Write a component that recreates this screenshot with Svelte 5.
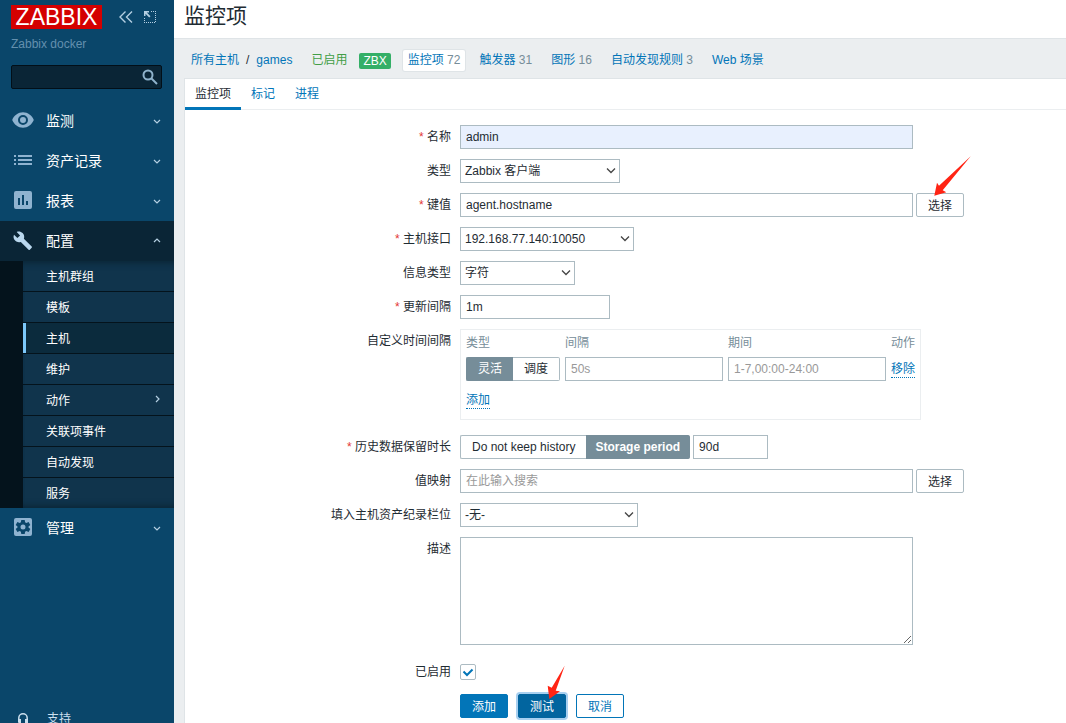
<script lang="ts">
	type MenuItem = { label: string; icon: string };

	const menuTop: MenuItem[] = [
		{ label: '监测', icon: 'eye' },
		{ label: '资产记录', icon: 'list' },
		{ label: '报表', icon: 'report' }
	];

	const submenu = ['主机群组', '模板', '主机', '维护', '动作', '关联项事件', '自动发现', '服务'];
	const currentPage = '主机';

	const hostLinks = [
		{ label: '监控项', count: 72, active: true },
		{ label: '触发器', count: 31 },
		{ label: '图形', count: 16 },
		{ label: '自动发现规则', count: 3 },
		{ label: 'Web 场景' }
	];

	const tabs = ['监控项', '标记', '进程'];
	let activeTab = $state('监控项');

	let name = $state('admin');
	let key = $state('agent.hostname');
	let delay = $state('1m');
	let intervalType = $state('flexible');
	let historyMode = $state('period');
	let history = $state('90d');
	let description = $state('');
	let enabled = $state(true);
</script>

{#snippet chevron(direction: string)}
	<svg class="chevron {direction}" width="8" height="8" viewBox="0 0 8 8" aria-hidden="true">
		<path d="M1 3 4 6 7 3" />
	</svg>
{/snippet}

{#snippet menuIcon(icon: string)}
	<svg class="menu-icon" width="22" height="22" viewBox="0 0 22 22" aria-hidden="true">
		{#if icon === 'eye'}
			<path fill-rule="evenodd" d="M11 2.300C6.200 2.300 2 5.500 0.200 10c1.800 4.500 6 7.700 10.800 7.700s9-3.200 10.800-7.700C20 5.500 15.800 2.300 11 2.300zM11 15a5 5 0 1 1 0-10 5 5 0 0 1 0 10zm0-2a3 3 0 1 0 0-6 3 3 0 0 0 0 6z" />
		{:else if icon === 'list'}
			<path d="M2 5h2v2H2zM6 5h14v2H6zM2 9h2v2H2zM6 9h14v2H6zM2 13h2v2H2zM6 13h14v2H6z" />
		{:else if icon === 'report'}
			<path fill-rule="evenodd" d="M4 1h14a2 2 0 0 1 2 2v14a2 2 0 0 1-2 2H4a2 2 0 0 1-2-2V3a2 2 0 0 1 2-2zm2 7v7h2V8zm4-3v10h2V5zm4 6v4h2v-4z" />
		{:else if icon === 'wrench'}
			<path d="M19.700 16.600 11.900 8.800c.7-1.900.3-4.100-1.300-5.700C9 1.500 6.600 1.100 4.700 2L8.100 5.400 5.400 8.100 2 4.700C1.100 6.600 1.500 9 3.100 10.600c1.600 1.600 3.800 2 5.700 1.300l7.800 7.800c.3.3.9.3 1.200 0l1.900-1.900c.4-.3.4-.9 0-1.200z" />
		{:else}
			<path fill-rule="evenodd" d="M4 1h14a2 2 0 0 1 2 2v14a2 2 0 0 1-2 2H4a2 2 0 0 1-2-2V3a2 2 0 0 1 2-2zm5.300 2-.4 2.200-1.200.7-2.300-.8-1.700 2.900 1.800 1.500v1l-1.800 1.500 1.700 2.900 2.300-.8 1.200.7.4 2.200h3.400l.4-2.200 1.200-.7 2.300.8 1.700-2.900-1.800-1.500v-1l1.800-1.500-1.700-2.900-2.300.8-1.200-.7-.4-2.200zM11 7.500a2.500 2.500 0 1 1 0 5 2.500 2.500 0 0 1 0-5z" />
		{/if}
	</svg>
{/snippet}

{#snippet selectArrow()}
	<svg class="select-arrow" width="10" height="8" viewBox="0 0 10 8" aria-hidden="true">
		<path d="M1 1.500 5 5.500 9 1.500" />
	</svg>
{/snippet}

<div class="layout">
	<aside class="sidebar">
		<div class="brand">
			<a class="logo" href="#home">ZABBIX</a>
			<button class="icon-button" aria-label="收起">
				<svg width="14" height="12" viewBox="0 0 14 12">
					<path d="M6.500.5 1 6l5.500 5.500M13 .5 7.500 6l5.500 5.500" fill="none" stroke="currentColor" stroke-width="1.400" />
				</svg>
			</button>
			<button class="icon-button" aria-label="隐藏">
				<svg width="12" height="12" viewBox="0 0 12 12">
					<path d="M0 0h5v1.500H2.800L6.500 5.200 5.200 6.500 1.500 2.800V5H0z" fill="currentColor" />
					<path d="M7 .5h5M11.500 2v10M.5 7v5M2 11.500h9" fill="none" stroke="currentColor" stroke-dasharray="1 1" />
				</svg>
			</button>
		</div>
		<div class="server-name">Zabbix docker</div>

		<form class="search">
			<input type="search" aria-label="搜索" />
			<button aria-label="搜索" type="button">
				<svg width="16" height="16" viewBox="0 0 16 16">
					<circle cx="6" cy="6" r="4.500" />
					<path d="M9.500 9.500 15 15" />
				</svg>
			</button>
		</form>

		<nav>
			{#each menuTop as item (item.icon)}
				<a class="menu-item" href="#{item.icon}">
					{@render menuIcon(item.icon)}
					<span>{item.label}</span>
					{@render chevron('down')}
				</a>
			{/each}
			<a class="menu-item open" href="#config">
				{@render menuIcon('wrench')}
				<span>配置</span>
				{@render chevron('up')}
			</a>
			<ul class="submenu">
				{#each submenu as page (page)}
					<li>
						<a class:current={page === currentPage} href="#{page}">
							<span>{page}</span>
							{#if page === '动作'}{@render chevron('right')}{/if}
						</a>
					</li>
				{/each}
			</ul>
			<a class="menu-item" href="#admin">
				{@render menuIcon('gear')}
				<span>管理</span>
				{@render chevron('down')}
			</a>
		</nav>

		<a class="support" href="#support">
			<svg width="12" height="14" viewBox="0 0 12 14" aria-hidden="true">
				<path d="M1.800 8V6a4.200 4.200 0 0 1 8.400 0v2" fill="none" stroke="currentColor" stroke-width="1.500" />
				<path d="M1 7h3v4H2a1 1 0 0 1-1-1zM8 7h3v5a1.500 1.500 0 0 1-1.500 1.500H6v-1h3V11H8z" fill="currentColor" />
			</svg>
			<span>支持</span>
		</a>
	</aside>

	<main>
		<header>
			<h1>监控项</h1>
		</header>

		<ul class="host-nav">
			<li class="crumbs">
				<a href="#hosts">所有主机</a><span>/</span><a href="#games">games</a>
			</li>
			<li class="status">已启用</li>
			<li class="agent"><span>ZBX</span></li>
			{#each hostLinks as link (link.label)}
				<li class="host-link" class:active={link.active}>
					<a href="#{link.label}">{link.label}</a>
					{#if link.count}<sup>{link.count}</sup>{/if}
				</li>
			{/each}
		</ul>

		<div class="panel">
			<div class="tabs" role="tablist">
				{#each tabs as tab (tab)}
					<button role="tab" aria-selected={activeTab === tab} class:active={activeTab === tab} onclick={() => (activeTab = tab)}>{tab}</button>
				{/each}
			</div>

			<form class="item-form">
				<div class="row">
					<label class="required" for="name">名称</label>
					<div class="field"><input id="name" class="wide filled" bind:value={name} /></div>
				</div>
				<div class="row">
					<label for="type">类型</label>
					<div class="field">
						<div class="select type"><select id="type"><option>Zabbix 客户端</option></select>{@render selectArrow()}</div>
					</div>
				</div>
				<div class="row">
					<label class="required" for="key">键值</label>
					<div class="field">
						<input id="key" class="wide" bind:value={key} />
						<div class="pointed">
							<button type="button" class="grey">选择</button>
							<svg class="arrow-key" width="38" height="41" viewBox="0 0 38 41" aria-hidden="true">
								<path d="M36.700.3 8.700 34.300l3.600 2L.3 39.700 3 26.700l2 3z" />
							</svg>
						</div>
					</div>
				</div>
				<div class="row">
					<label class="required" for="interface">主机接口</label>
					<div class="field">
						<div class="select interface"><select id="interface"><option>192.168.77.140:10050</option></select>{@render selectArrow()}</div>
					</div>
				</div>
				<div class="row">
					<label for="value-type">信息类型</label>
					<div class="field">
						<div class="select value-type"><select id="value-type"><option>字符</option></select>{@render selectArrow()}</div>
					</div>
				</div>
				<div class="row">
					<label class="required" for="delay">更新间隔</label>
					<div class="field"><input id="delay" class="small" bind:value={delay} /></div>
				</div>
				<div class="row spaced">
					<span class="label">自定义时间间隔</span>
					<div class="field">
						<div class="intervals">
							<table>
								<thead>
									<tr><th class="col-type">类型</th><th>间隔</th><th>期间</th><th class="col-action">动作</th></tr>
								</thead>
								<tbody>
									<tr>
										<td>
											<div class="segmented">
												<label><input type="radio" value="flexible" bind:group={intervalType} /><span>灵活</span></label>
												<label><input type="radio" value="scheduling" bind:group={intervalType} /><span>调度</span></label>
											</div>
										</td>
										<td><input aria-label="间隔" placeholder="50s" /></td>
										<td><input aria-label="期间" placeholder="1-7,00:00-24:00" /></td>
										<td><button type="button" class="link">移除</button></td>
									</tr>
								</tbody>
							</table>
							<button type="button" class="link">添加</button>
						</div>
					</div>
				</div>
				<div class="row">
					<label class="required" for="history">历史数据保留时长</label>
					<div class="field">
						<div class="segmented">
							<label><input type="radio" value="off" bind:group={historyMode} /><span>Do not keep history</span></label>
							<label><input type="radio" value="period" bind:group={historyMode} /><span class="strong">Storage period</span></label>
						</div>
						<input id="history" class="tiny" bind:value={history} />
					</div>
				</div>
				<div class="row">
					<label for="valuemap">值映射</label>
					<div class="field">
						<input id="valuemap" class="wide" placeholder="在此输入搜索" />
						<button type="button" class="grey">选择</button>
					</div>
				</div>
				<div class="row">
					<label for="inventory">填入主机资产纪录栏位</label>
					<div class="field">
						<div class="select inventory"><select id="inventory"><option>-无-</option></select>{@render selectArrow()}</div>
					</div>
				</div>
				<div class="row spaced">
					<label for="description">描述</label>
					<div class="field"><textarea id="description" class="wide" bind:value={description}></textarea></div>
				</div>
				<div class="row">
					<label for="enabled">已启用</label>
					<div class="field">
						<div class="check">
							<input id="enabled" type="checkbox" bind:checked={enabled} />
							{#if enabled}
								<svg width="16" height="16" viewBox="0 0 16 16" aria-hidden="true"><path d="M3.500 7.500 7 11l5.500-5.500" /></svg>
							{/if}
						</div>
					</div>
				</div>
				<div class="row">
					<span></span>
					<div class="field actions">
						<button type="button">添加</button>
						<div class="pointed">
							<button type="button" class="focused">测试</button>
							<svg class="arrow-test" width="20" height="35" viewBox="0 0 20 35" aria-hidden="true">
								<path d="M17.700.7 8.700 25.700l4.300.6L2.300 34 .7 20.700l4 2z" />
							</svg>
						</div>
						<button type="button" class="alt">取消</button>
					</div>
				</div>
			</form>
		</div>
	</main>
</div>

<style>
	:global(body) {
		margin: 0;
		background: #ebeef0;
		color: #1f2c33;
		font-family: 'Liberation Sans', 'Noto Sans CJK SC', sans-serif;
		font-size: 12px;
	}

	.layout {
		display: flex;
		min-height: 100vh;
	}
	.layout * {
		box-sizing: border-box;
	}

	a {
		color: #0275b8;
		text-decoration: none;
	}
	button,
	input,
	select,
	textarea {
		font: inherit;
		color: inherit;
		margin: 0;
	}
	button {
		cursor: pointer;
	}

	/* sidebar */
	.sidebar {
		position: sticky;
		top: 0;
		flex: 0 0 174px;
		display: flex;
		flex-direction: column;
		height: 100vh;
		overflow: hidden;
		background: #0a466a;
	}
	.brand {
		display: flex;
		align-items: center;
		padding: 5px 11px 0;
	}
	.logo {
		width: 91px;
		height: 24px;
		margin-right: 12px;
		background: #d40000;
		color: #fff;
		font-size: 23px;
		line-height: 25px;
		text-align: center;
	}
	.icon-button {
		display: flex;
		padding: 0;
		width: 24px;
		justify-content: center;
		background: none;
		border: 0;
		color: #b4cfe2;
	}
	.icon-button svg {
		flex-shrink: 0;
	}
	.server-name {
		padding: 0 11px;
		margin-top: 5px;
		line-height: 20px;
		color: #6490ae;
	}
	.search {
		display: flex;
		flex-shrink: 0;
		align-items: center;
		height: 24px;
		margin: 11px 12px 12px 11px;
		padding-right: 3px;
		background: #0a2536;
		border: 1px solid #020f18;
		border-radius: 2px;
	}
	.search input {
		flex: 1;
		min-width: 0;
		height: 22px;
		background: none;
		border: 0;
		color: #fff;
	}
	.search button {
		display: flex;
		padding: 0;
		background: none;
		border: 0;
	}
	.search svg {
		fill: none;
		stroke: #8fb3cc;
		stroke-width: 2;
	}

	nav {
		flex-shrink: 0;
	}
	.menu-item {
		display: flex;
		align-items: center;
		height: 40px;
		padding: 0 13px 0 12px;
		color: #fff;
		font-size: 14px;
	}
	.menu-item span {
		flex: 1;
		margin-left: 12px;
		padding-bottom: 2px;
	}
	.menu-item.open {
		background: #0a2536;
	}
	.menu-icon {
		fill: #8fb3d0;
	}
	.open .menu-icon {
		fill: #b9d7ee;
	}
	.chevron {
		fill: none;
		stroke: #b4cfe2;
		stroke-width: 1.2;
	}
	.chevron.up {
		transform: rotate(180deg);
	}
	.chevron.right {
		transform: rotate(-90deg);
	}
	.submenu {
		list-style: none;
		margin: 0;
		padding: 0;
		border-left: 23px solid #04131c;
		background: #10344c;
		box-shadow: inset 0 8px 6px -6px #0a2536, inset 0 -8px 6px -6px #0a2536;
	}
	.submenu li + li {
		border-top: 1px solid #04131c;
	}
	.submenu a {
		display: flex;
		align-items: center;
		justify-content: space-between;
		height: 30px;
		padding: 0 13px 2px 20px;
		border-left: 3px solid transparent;
		color: #fff;
	}
	.submenu a.current {
		background: #0b2b3d;
		border-left-color: #7cc8fa;
	}
	.support {
		display: flex;
		flex-shrink: 0;
		align-items: center;
		gap: 18px;
		height: 32px;
		margin-top: 155px;
		padding-left: 17px;
		color: #cbdfee;
	}
	.support span {
		line-height: 12px;
	}

	/* page header */
	main {
		flex: 1;
		min-width: 0;
		display: flex;
		flex-direction: column;
	}
	header {
		background: #fff;
		border-bottom: 1px solid #dfe4e7;
	}
	h1 {
		margin: 0;
		padding: 0 10px 6px;
		font-size: 21px;
		font-weight: normal;
		line-height: 32px;
	}
	.host-nav {
		display: flex;
		align-items: center;
		gap: 9px;
		list-style: none;
		margin: 0;
		padding: 11px 12px 7px;
		line-height: 21px;
		white-space: nowrap;
	}
	.crumbs {
		padding: 0 5px;
	}
	.crumbs span {
		margin: 0 7px;
	}
	.status {
		padding: 0 3px 0 5px;
		color: #429e47;
	}
	.agent {
		padding-right: 3px;
	}
	.agent span {
		display: block;
		padding: 0 4px;
		background: #34af67;
		border-radius: 2px;
		color: #fff;
		line-height: 16px;
	}
	.host-link {
		padding: 0 5px;
		border-radius: 2px;
	}
	.host-link.active {
		background: #fff;
		box-shadow: 0 0 0 1px #dfe4e7;
	}
	.host-link sup {
		font-size: 12px;
		line-height: 1;
		vertical-align: baseline;
		color: #768d99;
	}

	.panel {
		flex: 1;
		margin-left: 10px;
		background: #fff;
		border: 1px solid #dfe4e7;
		border-width: 1px 0 0 1px;
	}
	.tabs {
		display: flex;
		border-bottom: 1px solid #ebeef0;
	}
	.tabs button {
		height: 31px;
		margin-bottom: -1px;
		padding: 0 10px 2px;
		background: none;
		border: 0;
		border-bottom: 3px solid transparent;
		color: #0275b8;
	}
	.tabs button.active {
		border-bottom-color: #0275b8;
		color: #1f2c33;
	}

	/* form */
	.item-form {
		display: grid;
		gap: 10px;
		padding: 15px 0 4px;
	}
	.row {
		display: grid;
		grid-template-columns: 266px 1fr;
		column-gap: 9px;
	}
	.spaced {
		margin-bottom: 5px;
	}
	.row > label,
	.label {
		line-height: 24px;
		text-align: right;
	}
	.required::before {
		content: '* ';
		color: #e33734;
	}
	.field {
		display: flex;
		align-items: center;
		gap: 3px;
		min-height: 24px;
	}
	input,
	select,
	textarea {
		height: 24px;
		padding: 0 5px;
		background: #fff;
		border: 1px solid #acbbc2;
		border-radius: 0;
		outline: 0;
	}
	input::placeholder {
		color: #999;
	}
	.wide {
		width: 453px;
	}
	.small {
		width: 150px;
	}
	.tiny {
		width: 75px;
	}
	.filled {
		background: #e8f0fe;
	}
	textarea {
		display: block;
		height: 108px;
	}

	.select {
		position: relative;
	}
	.select select {
		width: 100%;
		padding: 0 20px 0 4px;
		appearance: none;
	}
	.select-arrow {
		position: absolute;
		top: 8px;
		right: 4px;
		fill: none;
		stroke: #444;
		stroke-width: 1.3;
		pointer-events: none;
	}
	.type {
		width: 160px;
	}
	.interface {
		width: 174px;
	}
	.value-type {
		width: 115px;
	}
	.inventory {
		width: 178px;
	}

	.field button {
		height: 24px;
		padding: 0 11px 1px;
		background: #0275b8;
		border: 1px solid #0275b8;
		border-radius: 2px;
		color: #fff;
	}
	.field button.grey {
		background: #fff;
		border-color: #acbbc2;
		color: #1f2c33;
	}
	.field button.alt {
		background: #fff;
		color: #0275b8;
	}
	.field button.focused {
		background: #02659f;
		border-color: #02659f;
		box-shadow: 0 0 0 2px #a8d0f0;
	}
	.field button.link {
		height: 17px;
		padding: 0;
		background: none;
		border: 0;
		border-bottom: 1px dotted #0275b8;
		border-radius: 0;
		color: #0275b8;
		line-height: 16px;
	}
	.actions {
		gap: 10px;
	}

	.segmented {
		display: flex;
		line-height: 22px;
		white-space: nowrap;
	}
	.segmented label {
		position: relative;
	}
	.segmented input {
		position: absolute;
		inset: 0;
		opacity: 0;
	}
	.segmented span {
		display: block;
		padding: 0 11px;
		border: 1px solid #acbbc2;
	}
	.segmented label:first-child span {
		border-right: 0;
		border-radius: 2px 0 0 2px;
	}
	.segmented label:last-child span {
		border-left: 0;
		border-radius: 0 2px 2px 0;
	}
	.segmented input:checked + span {
		background: #768d99;
		border-color: #768d99;
		color: #fff;
	}
	.segmented .strong {
		padding: 0 9px;
		font-weight: bold;
	}

	.intervals {
		padding: 3px 5px 10px;
		border: 1px solid #ebeef0;
	}
	.intervals table {
		margin-bottom: 11px;
		border-collapse: collapse;
	}
	.intervals th {
		width: 163px;
		padding: 0 0 4px;
		color: #768d99;
		font-weight: normal;
		line-height: 20px;
		text-align: left;
	}
	.intervals th.col-type {
		width: 99px;
	}
	.intervals th.col-action {
		width: 24px;
	}
	.intervals td {
		padding: 0;
	}
	.intervals td > input {
		display: block;
		width: 158px;
	}

	.check {
		position: relative;
		width: 16px;
		height: 16px;
	}
	.check input {
		display: block;
		width: 16px;
		height: 16px;
		padding: 0;
		border-radius: 2px;
		appearance: none;
	}
	.check svg {
		position: absolute;
		inset: 0;
		fill: none;
		stroke: #0275b8;
		stroke-width: 2;
		pointer-events: none;
	}

	.pointed {
		position: relative;
	}
	.pointed svg {
		position: absolute;
		fill: #ff2414;
		pointer-events: none;
	}
	.pointed .arrow-key {
		left: 18px;
		top: -37px;
	}
	.pointed .arrow-test {
		left: 29px;
		top: -29px;
	}
</style>
